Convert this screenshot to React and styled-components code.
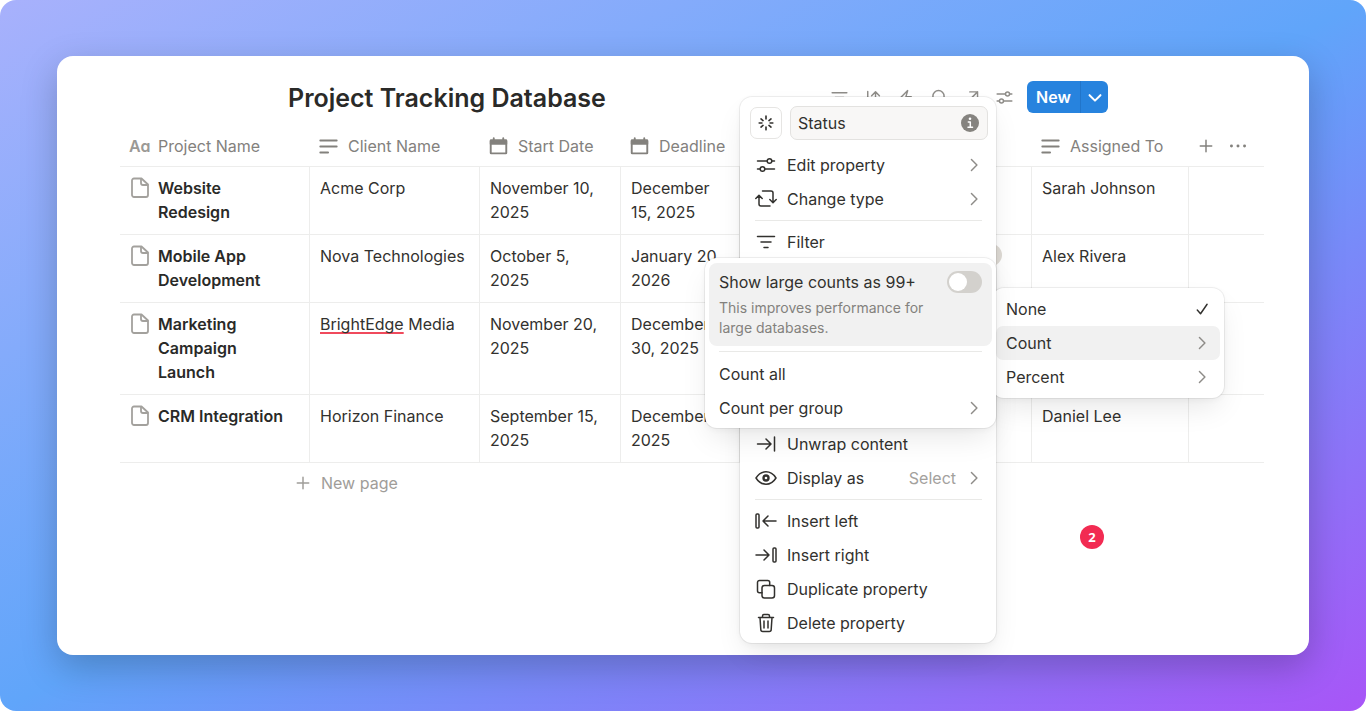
import React, { useState } from 'react';
import styled, { createGlobalStyle } from 'styled-components';

const GlobalStyle = createGlobalStyle`
    * {
        box-sizing: border-box;
    }

    body {
        margin: 0;
        background: #fff;
        color: #32312e;
        font-family: Inter, "Liberation Sans", sans-serif;
        font-size: 16px;
        line-height: 24px;
    }

    button, input {
        font: inherit;
        color: inherit;
    }
`;

const Backdrop = styled.div`
    min-height: 100vh;
    padding: 56px 57px;
    display: flex;
    border-radius: 16px;
    background: linear-gradient(to bottom right, #a8b1fc, #60a5fa 50%, #a855f7);
`;

const Card = styled.main`
    position: relative;
    flex: 1;
    min-width: 0;
    padding: 25px 45px 24px 63px;
    border-radius: 16px;
    background: #fff;
    box-shadow: 0 12px 36px rgba(0, 0, 0, 0.22);
`;

const Toolbar = styled.header`
    display: flex;
    align-items: center;
    justify-content: space-between;
    height: 32px;
    margin-bottom: 13px;
    padding: 0 156px 0 168px;
`;

const Title = styled.h1`
    margin: 0;
    padding-top: 2px;
    font-size: 25px;
    line-height: 32px;
    font-weight: 600;
    color: #2a2a28;
`;

const Tools = styled.div`
    display: flex;
    align-items: center;
    gap: 13px;
    color: #8e8c88;
`;

const IconButton = styled.button`
    display: flex;
    align-items: center;
    justify-content: center;
    width: ${(props) => (props.$small ? 16 : 20)}px;
    height: 20px;
    padding: 0;
    border: 0;
    background: none;
    color: inherit;
`;

const NewGroup = styled.div`
    display: flex;
    height: 32px;
    overflow: hidden;
    border-radius: 6px;
    background: #2783de;
    color: #fff;
`;

const NewButton = styled.button`
    width: ${(props) => (props.$narrow ? 28 : 53)}px;
    padding: 0;
    display: flex;
    align-items: center;
    justify-content: center;
    border: 0;
    border-left: ${(props) => (props.$narrow ? '1px solid #2175ca' : '0')};
    background: none;
    font-weight: 600;
`;

const Table = styled.table`
    width: 100%;
    table-layout: fixed;
    border-collapse: separate;
    border-spacing: 0;
`;

const Col = styled.col`
    width: ${(props) => (props.$width ? `${props.$width}px` : 'auto')};
`;

const HeadCell = styled.th`
    height: 41px;
    padding: 0 9px;
    border-bottom: 1px solid #ededec;
    font-weight: 400;
    text-align: left;
    white-space: nowrap;
    color: #83817d;
`;

const HeadLabel = styled.div`
    display: flex;
    align-items: center;
    gap: ${(props) => props.$gap || 10}px;
`;

const TextMark = styled.span`
    width: 21px;
    font-weight: 600;
    font-feature-settings: "cv11";
    color: #9b9995;
`;

const Cell = styled.td`
    padding: ${(props) => (props.$name ? '9px 24px 10px 9px' : '9px 10px 10px')};
    border-bottom: 1px solid #ededec;
    border-right: ${(props) => (props.$last ? '0' : '1px solid #ededec')};
    vertical-align: top;
`;

const PageName = styled.div`
    display: grid;
    grid-template-columns: 20px 1fr;
    gap: 9px;
    font-weight: 600;
    color: #2a2a28;
`;

const Misspelled = styled.span`
    text-decoration: underline 2px #f04a5c;
    text-underline-offset: 2px;
    text-decoration-skip-ink: none;
`;

const Tag = styled.span`
    display: block;
    width: 101px;
    height: 22px;
    border-radius: 11px;
    background: #dedad4;
`;

const NewPage = styled.button`
    display: flex;
    align-items: center;
    gap: 9px;
    height: 24px;
    margin: 8px 0 0 174px;
    padding: 0;
    border: 0;
    background: none;
    color: #9f9d99;
`;

const Menu = styled.div`
    position: absolute;
    padding: 4px;
    border-radius: 12px;
    background: #fff;
    box-shadow: 0 0 0 1px rgba(0, 0, 0, 0.06), 0 14px 30px -6px rgba(0, 0, 0, 0.1), 0 2px 6px rgba(0, 0, 0, 0.04);
`;

const PropertyMenu = styled(Menu)`
    top: 41px;
    left: 683px;
    width: 256px;
    padding: 5px 4px 3px 5px;
    z-index: 1;
`;

const CalculateMenu = styled(Menu)`
    top: 232px;
    left: 935px;
    width: 232px;
    z-index: 2;
`;

const CountMenu = styled(Menu)`
    top: 202px;
    left: 648px;
    width: 291px;
    padding: 5px 4px 3px;
    z-index: 3;
`;

const NameRow = styled.div`
    display: flex;
    align-items: center;
    gap: 8px;
    padding: 4px 4px 8px 5px;
`;

const IconBox = styled.button`
    display: flex;
    align-items: center;
    justify-content: center;
    width: 32px;
    height: 32px;
    padding: 0;
    border: 1px solid #e6e5e3;
    border-radius: 7px;
    background: #fff;
`;

const NameField = styled.label`
    flex: 1;
    min-width: 0;
    height: 34px;
    display: flex;
    align-items: center;
    padding: 0 7px;
    border: 1px solid #e3e2e0;
    border-radius: 7px;
    background: #f8f7f6;
`;

const NameInput = styled.input`
    flex: 1;
    min-width: 0;
    padding: 0;
    border: 0;
    outline: 0;
    background: none;
`;

const Item = styled.button`
    display: flex;
    align-items: center;
    gap: 10px;
    width: 100%;
    height: 34px;
    padding: 0 10px;
    border: 0;
    border-radius: 7px;
    background: ${(props) => (props.$active ? '#f1f1f1' : 'none')};
    text-align: left;
`;

const ItemText = styled.span`
    flex: 1;
`;

const Hint = styled.span`
    color: #a3a19d;
`;

const Divider = styled.hr`
    height: 1px;
    margin: ${(props) => props.$gap || 4}px 10px;
    border: 0;
    background: #e9e9e7;
`;

const ItemGroup = styled.div`
    margin-top: ${(props) => props.$offset || 0}px;
`;

const Option = styled.div`
    padding: 8px 10px;
    border-radius: 8px;
    background: #f1f1f1;
`;

const OptionTitle = styled.label`
    display: flex;
    align-items: center;
    justify-content: space-between;
    height: 22px;
`;

const OptionNote = styled.p`
    margin: 5px 0 0;
    width: 210px;
    font-size: 14px;
    line-height: 20px;
    color: #83817d;
`;

const Toggle = styled.input`
    appearance: none;
    width: 35px;
    height: 22px;
    margin: 0;
    padding: 2px;
    border-radius: 11px;
    background: ${(props) => (props.checked ? '#2783de' : '#d3d1cd')};

    &::before {
        content: "";
        display: block;
        width: 18px;
        height: 18px;
        margin-left: ${(props) => (props.checked ? 13 : 0)}px;
        border-radius: 50%;
        background: #fff;
    }
`;

const Marker = styled.div`
    position: absolute;
    top: 469px;
    left: 1023px;
    width: 24px;
    height: 24px;
    border-radius: 50%;
    background: #f22b52;
    color: #fff;
    font-family: "Open Sans", sans-serif;
    font-size: 13px;
    font-weight: 700;
    text-align: center;
`;

const Svg = styled.svg`
    flex: none;
    display: block;
    fill: none;
    stroke: currentColor;
    stroke-linecap: round;
    stroke-linejoin: round;
`;

const paths = {
    filter: <path d="M2.500 5.500h17M6 11h10M9 16.500h4" />,
    sort: <path d="M5.500 4v14M14.500 18V4.500M10 9l4.500-4.500L19 9" />,
    bolt: <path d="M13.500 3 3.500 13h6l-2 7 10-10h-6z" />,
    search: <><circle cx="11" cy="9.500" r="6.500" /><path d="m15.500 14.500 4 4" /></>,
    expand: <path d="M9 4.500h9v9M18 4.500 4.500 18" />,
    sliders: (
        <>
            <path d="M2.500 7H12M17 7h2.500M2.500 15H5M10 15h9.500" />
            <circle cx="14.500" cy="7" r="2.300" />
            <circle cx="7.500" cy="15" r="2.300" />
        </>
    ),
    swap: (
        <>
            <path d="M4 8v8a2 2 0 0 0 2 2h9M.8 10.500 4 7.200l3.200 3.300" />
            <path d="M18 14V5a2 2 0 0 0-2-2H7.500M14.800 11.500 18 14.700l3.200-3.200" />
        </>
    ),
    unwrap: <path d="M2.500 11h13M11 6l5 5-5 5M19.500 4v14" />,
    eye: (
        <>
            <path d="M1 11C3.500 7 7 4.800 11 4.800S18.500 7 21 11c-2.500 4-6 6.200-10 6.200S3.500 15 1 11z" />
            <circle cx="11" cy="11" r="3.700" fill="currentColor" stroke="none" />
            <circle cx="11" cy="11" r="1.300" fill="#fff" stroke="none" />
        </>
    ),
    insertLeft: <><rect x="1" y="4" width="3" height="14" rx="1" /><path d="M21 11H8M13 6l-5 5 5 5" /></>,
    insertRight: <><rect x="18" y="4" width="3" height="14" rx="1" /><path d="M1 11h13M9 6l5 5-5 5" /></>,
    duplicate: (
        <>
            <rect x="7" y="7.500" width="12.500" height="12.500" rx="2.500" />
            <path d="M7 14.800H4.500a2 2 0 0 1-2-2V4.500a2 2 0 0 1 2-2h8.200a2 2 0 0 1 2 2v3" />
        </>
    ),
    trash: (
        <path d="M3.500 5.500h15M7.500 5.500V4a1.500 1.500 0 0 1 1.500-1.500h4A1.500 1.500 0 0 1 14.500 4v1.500M5 5.500l.8 12a2 2 0 0 0 2 2h6.400a2 2 0 0 0 2-2l.8-12M9 9v7M13 9v7" />
    ),
    spinner: (
        <path d="M11 3.500v3M11 15.500v3M3.500 11h3M15.500 11h3M5.500 6.500l2.200 1.800M14.300 13.700l2.200 1.800M5.500 15.500l2.200-1.800M14.300 8.300l2.200-1.800" />
    ),
    chevron: <path d="m7.500 3.500 7.500 7.500-7.500 7.500" />,
    chevronDown: <path d="m5 9 6 6 6-6" />,
    check: <path d="m4.500 12.500 4.500 5L18 4.500" />,
    plus: <path d="M11 4v14M4 11h14" />,
    text: <path d="M1.500 4h19M1.500 11h19M1.500 18h9" />,
    page: (
        <>
            <path d="M5 2.500h7.500l6.500 6V19a2 2 0 0 1-2 2H5a2 2 0 0 1-2-2V4.500a2 2 0 0 1 2-2z" />
            <path d="M12 3v4a2 2 0 0 0 2 2h4.500" />
        </>
    ),
    calendar: (
        <>
            <path d="M5.500 1.500v3M16.500 1.500v3" />
            <rect x="2" y="4" width="18" height="15" rx=".5" />
            <path d="M2 4h18v4H2z" fill="currentColor" />
        </>
    ),
    dots: (
        <g fill="currentColor" stroke="none">
            <circle cx="3" cy="11" r="1.800" />
            <circle cx="11" cy="11" r="1.800" />
            <circle cx="19" cy="11" r="1.800" />
        </g>
    ),
};

function Icon({ name, size = 22, weight = 1.5, color }) {
    return (
        <Svg width={size} height={size} viewBox="0 0 22 22" strokeWidth={weight} color={color} aria-hidden="true">
            {paths[name]}
        </Svg>
    );
}

function InfoIcon() {
    return (
        <Svg width="20" height="20" viewBox="0 0 20 20" aria-hidden="true">
            <circle cx="10" cy="10" r="9" fill="#85837f" stroke="none" />
            <path d="M8.300 9h2v5M8 14.200h4.500" stroke="#fff" strokeWidth="1.500" />
            <circle cx="10" cy="5.800" r="1.300" fill="#fff" stroke="none" />
        </Svg>
    );
}

function MenuItem({ icon, label, hint, arrow, checked, active }) {
    return (
        <Item type="button" $active={active}>
            {icon && <Icon name={icon} />}
            <ItemText>{label}</ItemText>
            {hint && <Hint>{hint}</Hint>}
            {arrow && <Icon name="chevron" size={16} weight={2} color="#8e8c88" />}
            {checked && <Icon name="check" size={16} weight={2} />}
        </Item>
    );
}

const columns = [
    { label: 'Client Name', icon: 'text' },
    { label: 'Start Date', icon: 'calendar' },
    { label: 'Deadline', icon: 'calendar' },
];

const tools = [
    { name: 'filter', label: 'Filter' },
    { name: 'sort', label: 'Sort' },
    { name: 'bolt', label: 'Automations' },
    { name: 'search', label: 'Search' },
    { name: 'expand', label: 'Open as full page' },
    { name: 'sliders', label: 'Settings' },
];

const rows = [
    { name: 'Website Redesign', client: 'Acme Corp', start: 'November 10, 2025', deadline: 'December 15, 2025', person: 'Sarah Johnson' },
    { name: 'Mobile App Development', client: 'Nova Technologies', start: 'October 5, 2025', deadline: 'January 20, 2026', person: 'Alex Rivera', tag: true },
    { name: 'Marketing Campaign Launch', client: <><Misspelled>BrightEdge</Misspelled> Media</>, start: 'November 20, 2025', deadline: 'December 30, 2025' },
    { name: 'CRM Integration', client: 'Horizon Finance', start: 'September 15, 2025', deadline: 'December 5, 2025', person: 'Daniel Lee' },
];

function ProjectTable() {
    return (
        <Table>
            <colgroup>
                <Col $width={190} />
                <Col $width={170} />
                <Col $width={141} />
                <Col $width={119} />
                <Col $width={151} />
                <Col />
                <Col $width={157} />
                <Col $width={75} />
            </colgroup>
            <thead>
                <tr>
                    <HeadCell>
                        <HeadLabel $gap={8}><TextMark>Aa</TextMark>Project Name</HeadLabel>
                    </HeadCell>
                    {columns.map((column) => (
                        <HeadCell key={column.label}>
                            <HeadLabel><Icon name={column.icon} size={19} weight={2.2} />{column.label}</HeadLabel>
                        </HeadCell>
                    ))}
                    <HeadCell />
                    <HeadCell />
                    <HeadCell>
                        <HeadLabel><Icon name="text" size={19} weight={2.2} />Assigned To</HeadLabel>
                    </HeadCell>
                    <HeadCell>
                        <HeadLabel $gap={16}>
                            <IconButton type="button" $small aria-label="Add property"><Icon name="plus" size={18} weight={1.8} /></IconButton>
                            <IconButton type="button" $small aria-label="More"><Icon name="dots" size={18} /></IconButton>
                        </HeadLabel>
                    </HeadCell>
                </tr>
            </thead>
            <tbody>
                {rows.map((row) => (
                    <tr key={row.name}>
                        <Cell $name>
                            <PageName><Icon name="page" weight={1.8} color="#a3a19d" />{row.name}</PageName>
                        </Cell>
                        <Cell>{row.client}</Cell>
                        <Cell>{row.start}</Cell>
                        <Cell>{row.deadline}</Cell>
                        <Cell />
                        <Cell>{row.tag && <Tag />}</Cell>
                        <Cell>{row.person}</Cell>
                        <Cell $last />
                    </tr>
                ))}
            </tbody>
        </Table>
    );
}

function App() {
    const [name, setName] = useState('Status');
    const [largeCounts, setLargeCounts] = useState(false);

    return (
        <>
            <GlobalStyle />
            <Backdrop>
                <Card>
                    <Toolbar>
                        <Title>Project Tracking Database</Title>
                        <Tools>
                            {tools.map((tool) => (
                                <IconButton key={tool.name} type="button" aria-label={tool.label}>
                                    <Icon name={tool.name} size={19} weight={1.7} />
                                </IconButton>
                            ))}
                            <NewGroup>
                                <NewButton type="button">New</NewButton>
                                <NewButton type="button" $narrow aria-label="Templates">
                                    <Icon name="chevronDown" size={20} weight={2.2} />
                                </NewButton>
                            </NewGroup>
                        </Tools>
                    </Toolbar>
                    <ProjectTable />
                    <NewPage type="button"><Icon name="plus" size={18} weight={1.8} />New page</NewPage>

                    <PropertyMenu>
                        <NameRow>
                            <IconBox type="button" aria-label="Property icon"><Icon name="spinner" size={20} weight={1.8} /></IconBox>
                            <NameField>
                                <NameInput aria-label="Property name" value={name} onChange={(e) => setName(e.target.value)} />
                                <InfoIcon />
                            </NameField>
                        </NameRow>
                        <MenuItem icon="sliders" label="Edit property" arrow />
                        <MenuItem icon="swap" label="Change type" arrow />
                        <Divider />
                        <MenuItem icon="filter" label="Filter" />
                        <ItemGroup $offset={168}>
                            <MenuItem icon="unwrap" label="Unwrap content" />
                            <MenuItem icon="eye" label="Display as" hint="Select" arrow />
                        </ItemGroup>
                        <Divider />
                        <MenuItem icon="insertLeft" label="Insert left" />
                        <MenuItem icon="insertRight" label="Insert right" />
                        <MenuItem icon="duplicate" label="Duplicate property" />
                        <MenuItem icon="trash" label="Delete property" />
                    </PropertyMenu>

                    <CalculateMenu>
                        <MenuItem label="None" checked />
                        <MenuItem label="Count" arrow active />
                        <MenuItem label="Percent" arrow />
                    </CalculateMenu>

                    <CountMenu>
                        <Option>
                            <OptionTitle>
                                Show large counts as 99+
                                <Toggle
                                    type="checkbox"
                                    checked={largeCounts}
                                    onChange={(e) => setLargeCounts(e.target.checked)}
                                />
                            </OptionTitle>
                            <OptionNote>This improves performance for large databases.</OptionNote>
                        </Option>
                        <Divider $gap={5} />
                        <MenuItem label="Count all" />
                        <MenuItem label="Count per group" arrow />
                    </CountMenu>

                    <Marker>2</Marker>
                </Card>
            </Backdrop>
        </>
    );
}

export default App;
